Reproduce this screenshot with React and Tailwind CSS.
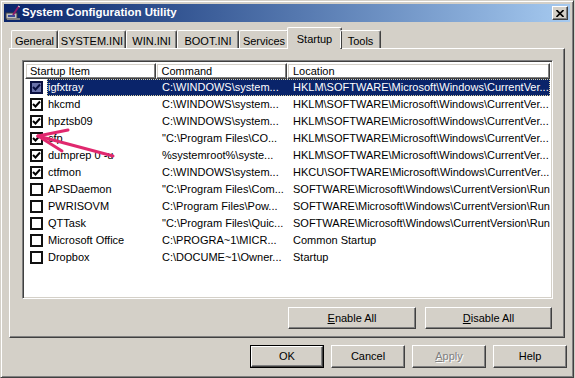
import React from "react";

const rows = [
  { name: "igfxtray", cmd: "C:\\WINDOWS\\system...", loc: "HKLM\\SOFTWARE\\Microsoft\\Windows\\CurrentVer...", on: true, sel: true },
  { name: "hkcmd", cmd: "C:\\WINDOWS\\system...", loc: "HKLM\\SOFTWARE\\Microsoft\\Windows\\CurrentVer...", on: true },
  { name: "hpztsb09", cmd: "C:\\WINDOWS\\system...", loc: "HKLM\\SOFTWARE\\Microsoft\\Windows\\CurrentVer...", on: true },
  { name: "cfp", cmd: "\"C:\\Program Files\\CO...", loc: "HKLM\\SOFTWARE\\Microsoft\\Windows\\CurrentVer...", on: true },
  { name: "dumprep 0 -u", cmd: "%systemroot%\\syste...", loc: "HKLM\\SOFTWARE\\Microsoft\\Windows\\CurrentVer...", on: true },
  { name: "ctfmon", cmd: "C:\\WINDOWS\\system...", loc: "HKCU\\SOFTWARE\\Microsoft\\Windows\\CurrentVer...", on: true },
  { name: "APSDaemon", cmd: "\"C:\\Program Files\\Com...", loc: "SOFTWARE\\Microsoft\\Windows\\CurrentVersion\\Run", on: false },
  { name: "PWRISOVM", cmd: "C:\\Program Files\\Pow...", loc: "SOFTWARE\\Microsoft\\Windows\\CurrentVersion\\Run", on: false },
  { name: "QTTask", cmd: "\"C:\\Program Files\\Quic...", loc: "SOFTWARE\\Microsoft\\Windows\\CurrentVersion\\Run", on: false },
  { name: "Microsoft Office", cmd: "C:\\PROGRA~1\\MICR...", loc: "Common Startup", on: false },
  { name: "Dropbox", cmd: "C:\\DOCUME~1\\Owner...", loc: "Startup", on: false },
];

const tabs = [
  { label: "General", w: "w-[47px]" },
  { label: "SYSTEM.INI", w: "w-[68px]" },
  { label: "WIN.INI", w: "w-[51px]" },
  { label: "BOOT.INI", w: "w-[62px]" },
  { label: "Services", w: "w-[50px]" },
  { label: "Startup", w: "w-[55px]", active: true },
  { label: "Tools", w: "w-[41px]" },
];

const raised =
  "border border-t-white border-l-white border-r-[#404040] border-b-[#404040] shadow-[inset_-1px_-1px_0_#808080,inset_1px_1px_0_#d4d0c8]";

function Check({ on, sel }) {
  return (
    <div
      className={`w-[13px] h-[13px] border-2 flex items-center justify-center ${
        sel ? "border-[#0a1040] bg-[#6a72aa]" : "border-[#111] bg-white"
      }`}
    >
      {on && (
        <svg width="9" height="9" viewBox="0 0 9 9">
          <path d="M1 4 L3.5 6.5 L8 1.5" fill="none" stroke={sel ? "#0a1040" : "#000"} strokeWidth="2" />
        </svg>
      )}
    </div>
  );
}

function Btn({ children, className = "", def }) {
  return (
    <div className={`${def ? "border border-black" : ""} ${className}`}>
      <div className={`${raised} h-full w-full flex items-center justify-center bg-[#d4d0c8]`}>
        {children}
      </div>
    </div>
  );
}

export default function App() {
  return (
    <div className="w-[575px] h-[378px] bg-[#d4d0c8] text-[11px] text-black font-['Liberation_Sans',Arial,sans-serif] relative overflow-hidden">
      <div className="h-full w-[574px] border border-t-[#d4d0c8] border-l-[#d4d0c8] border-r-[#404040] border-b-[#404040] shadow-[inset_1px_1px_0_#fff,inset_-1px_-1px_0_#808080] p-[3px] flex flex-col">
        {/* title bar */}
        <div className="h-[18px] bg-linear-to-r from-[#0a246a] to-[#a6caf0] flex items-center pl-[1px] pr-[2px]">
          <svg width="16" height="16" viewBox="0 0 16 16" className="shrink-0">
            <rect x="1" y="8" width="11" height="6" fill="#c0c0c0" stroke="#404040" strokeWidth="1" />
            <rect x="3" y="10" width="7" height="2" fill="#3a4a9a" />
            <rect x="2" y="13" width="13" height="2" fill="#808080" />
            <path d="M8 10 L14 1" stroke="#8a1a6a" strokeWidth="2" />
            <path d="M13 1 L15 2" stroke="#e0e0e0" strokeWidth="1" />
          </svg>
          <span className="ml-[1px] text-white font-bold text-[11.5px]">System Configuration Utility</span>
          <div className="ml-auto w-[16px] h-[14px] border border-t-white border-l-white border-r-[#404040] border-b-[#404040] shadow-[inset_-1px_-1px_0_#808080] bg-[#d4d0c8] flex items-center justify-center">
            <svg width="8" height="7" viewBox="0 0 8 7">
              <path d="M0.5 0 L7.5 7 M7.5 0 L0.5 7" stroke="#000" strokeWidth="1.6" />
            </svg>
          </div>
        </div>

        {/* tabs */}
        <div className="mt-[5px] ml-[7px] h-[21px] flex items-end relative z-10">
          {tabs.map((t) =>
            t.active ? (
              <div
                key={t.label}
                className={`${t.w} -mx-[2px] h-[22px] -mb-[1px] bg-[#d4d0c8] border-t border-l border-t-white border-l-white border-r border-r-[#404040] shadow-[inset_-1px_0_0_#808080] rounded-t-[2px] flex justify-center pt-[3px]`}
              >
                {t.label}
              </div>
            ) : (
              <div
                key={t.label}
                className={`${t.w} h-[18px] border-t border-l border-t-white border-l-white border-r border-r-[#404040] shadow-[inset_-1px_0_0_#808080] rounded-t-[2px] flex justify-center pt-[2px]`}
              >
                {t.label}
              </div>
            )
          )}
        </div>

        {/* panel */}
        <div className={`ml-[5px] w-[556px] h-[290px] ${raised} px-[12px] pt-[11px] flex flex-col`}>
          <div className="w-[531px] h-[239px] border border-t-[#808080] border-l-[#808080] border-r-white border-b-white shadow-[inset_1px_1px_0_#404040,inset_-1px_-1px_0_#d4d0c8] bg-white p-[2px] flex flex-col relative">
            <div className="flex h-[16px] shrink-0">
              <div className={`${raised} w-[131px] pl-[4px] flex items-center`}>Startup Item</div>
              <div className={`${raised} w-[132px] pl-[5px] flex items-center`}>Command</div>
              <div className={`${raised} w-[264px] pl-[5px] flex items-center`}>Location</div>
            </div>
            {rows.map((r) => (
              <div key={r.name} className="flex h-[17px] items-center">
                <div className="w-[22px] pl-[5px] shrink-0">
                  <Check on={r.on} sel={r.sel} />
                </div>
                <div
                  className={`flex h-full items-center flex-1 ${
                    r.sel ? "bg-[#0a246a] text-white outline-1 outline-dotted outline-[#d8d0a0] -outline-offset-1" : ""
                  }`}
                >
                  <div className="w-[109px] pl-[1px] whitespace-nowrap">{r.name}</div>
                  <div className="w-[132px] pl-[6px] whitespace-nowrap">{r.cmd}</div>
                  <div className="flex-1 pl-[5px] whitespace-nowrap">{r.loc}</div>
                </div>
              </div>
            ))}
          </div>

          <div className="flex gap-[9px] justify-end mt-[8px]">
            <Btn className="w-[128px] h-[22px]">
              <span>
                <u>E</u>nable All
              </span>
            </Btn>
            <Btn className="w-[127px] h-[22px]">
              <span>
                <u>D</u>isable All
              </span>
            </Btn>
          </div>
        </div>

        {/* bottom buttons */}
        <div className="flex gap-[7px] justify-end mt-[7px] pr-[3px]">
          <Btn def className="w-[74px] h-[23px]">OK</Btn>
          <Btn className="w-[74px] h-[23px]">Cancel</Btn>
          <Btn className="w-[74px] h-[23px]">
            <span className="text-[#808080] [text-shadow:1px_1px_0_#fff]">
              <u>A</u>pply
            </span>
          </Btn>
          <Btn className="w-[74px] h-[23px]">Help</Btn>
        </div>
      </div>

      {/* pink annotation arrow */}
      <svg className="absolute left-0 top-0 pointer-events-none" width="575" height="378">
        <g stroke="#e0286e" strokeWidth="3" strokeLinecap="round" fill="none">
          <path d="M38 136 L113 156" />
          <path d="M38 136 L68 130" />
          <path d="M38 136 L62 151" />
        </g>
      </svg>
    </div>
  );
}
